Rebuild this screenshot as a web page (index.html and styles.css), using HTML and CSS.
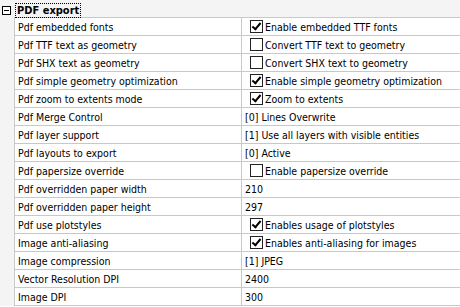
FILE: index.html
```html
<!DOCTYPE html>
<html>
<head>
<meta charset="utf-8">
<link rel="stylesheet" href="styles.css">
</head>
<body>
<div class="grid">
  <div class="cat">
    <div class="gutter"><span class="toggle"></span></div>
    <div class="cat-title"><span class="focus">PDF export</span></div>
  </div>
  <div class="row"><div class="gutter"></div><div class="name">Pdf embedded fonts</div><div class="val"><span class="cb on"></span>Enable embedded TTF fonts</div></div>
  <div class="row"><div class="gutter"></div><div class="name">Pdf TTF text as geometry</div><div class="val"><span class="cb"></span>Convert TTF text to geometry</div></div>
  <div class="row"><div class="gutter"></div><div class="name">Pdf SHX text as geometry</div><div class="val"><span class="cb"></span>Convert SHX text to geometry</div></div>
  <div class="row"><div class="gutter"></div><div class="name">Pdf simple geometry optimization</div><div class="val"><span class="cb on"></span>Enable simple geometry optimization</div></div>
  <div class="row"><div class="gutter"></div><div class="name">Pdf zoom to extents mode</div><div class="val"><span class="cb on"></span>Zoom to extents</div></div>
  <div class="row"><div class="gutter"></div><div class="name">Pdf Merge Control</div><div class="val">[0] Lines Overwrite</div></div>
  <div class="row"><div class="gutter"></div><div class="name">Pdf layer support</div><div class="val">[1] Use all layers with visible entities</div></div>
  <div class="row"><div class="gutter"></div><div class="name">Pdf layouts to export</div><div class="val">[0] Active</div></div>
  <div class="row"><div class="gutter"></div><div class="name">Pdf papersize override</div><div class="val"><span class="cb"></span>Enable papersize override</div></div>
  <div class="row"><div class="gutter"></div><div class="name">Pdf overridden paper width</div><div class="val">210</div></div>
  <div class="row"><div class="gutter"></div><div class="name">Pdf overridden paper height</div><div class="val">297</div></div>
  <div class="row"><div class="gutter"></div><div class="name">Pdf use plotstyles</div><div class="val"><span class="cb on"></span>Enables usage of plotstyles</div></div>
  <div class="row"><div class="gutter"></div><div class="name">Image anti-aliasing</div><div class="val"><span class="cb on"></span>Enables anti-aliasing for images</div></div>
  <div class="row"><div class="gutter"></div><div class="name">Image compression</div><div class="val">[1] JPEG</div></div>
  <div class="row"><div class="gutter"></div><div class="name">Vector Resolution DPI</div><div class="val">2400</div></div>
  <div class="row"><div class="gutter"></div><div class="name">Image DPI</div><div class="val">300</div></div>
</div>
</body>
</html>
```
FILE: styles.css
```css
html, body {
  margin: 0;
  padding: 0;
  background: #ffffff;
}
.grid {
  width: 460px;
  font-family: "DejaVu Sans Condensed", "DejaVu Sans", sans-serif;
  font-stretch: condensed;
  font-size: 10.5px;
  color: #000;
}
.cat {
  display: flex;
  height: 18px;
  background: #f4f4f4;
}
.cat .gutter {
  width: 14px;
  flex: none;
  padding: 6px 0 0 2px;
  box-sizing: border-box;
}
.toggle {
  display: block;
  position: relative;
  width: 9px;
  height: 9px;
  border: 1px solid #000;
  background: #fff;
  box-sizing: border-box;
}
.toggle::after {
  content: "";
  position: absolute;
  left: 1px;
  top: 3px;
  width: 5px;
  height: 1px;
  background: #000;
}
.cat-title {
  flex: 1;
  display: flex;
  align-items: flex-end;
  padding: 0 0 0 2px;
  border-bottom: 1px solid #c8c8c8;
}
.focus {
  font-size: 11px;
  font-weight: bold;
  outline: 1px dotted #000;
  outline-offset: 0;
  padding: 0 1px;
  line-height: 13px;
}
.row {
  display: flex;
  height: 18px;
}
.row .gutter {
  width: 14px;
  flex: none;
  background: #f4f4f4;
}
.name {
  flex: none;
  width: 228px;
  box-sizing: border-box;
  border-left: 1px solid #c8c8c8;
  border-right: 1px solid #c8c8c8;
  border-bottom: 1px solid #c8c8c8;
  padding-left: 3px;
  display: flex;
  align-items: center;
  white-space: nowrap;
  overflow: hidden;
}
.val {
  flex: 1;
  border-bottom: 1px solid #c8c8c8;
  padding-left: 3px;
  display: flex;
  align-items: center;
  white-space: nowrap;
  overflow: hidden;
}
.cb {
  position: relative;
  width: 13px;
  height: 13px;
  box-sizing: border-box;
  border: 1px solid #222;
  background: #fff;
  margin: 0 2px 0 5px;
  flex: none;
}
.cb.on::after {
  content: "";
  position: absolute;
  left: 3px;
  top: 0px;
  width: 3px;
  height: 7px;
  border: solid #000;
  border-width: 0 2px 2px 0;
  transform: rotate(40deg);
}
```
